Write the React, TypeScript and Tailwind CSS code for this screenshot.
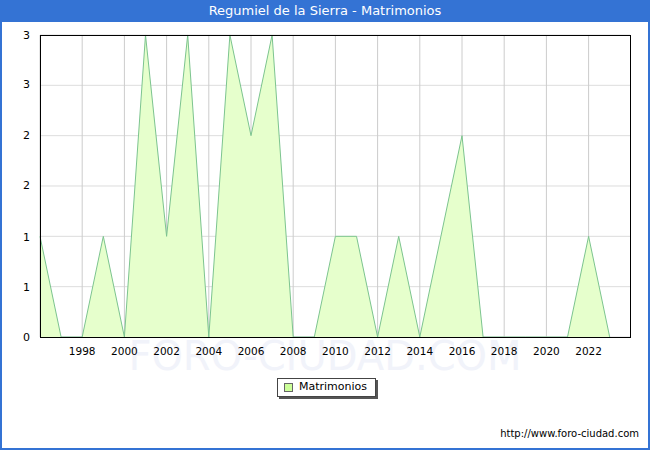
const data = [1,0,0,1,0,3,1,3,0,3,2,3,0,0,1,1,0,1,0,1,2,0,0,0,0,0,1,0];
const X = (i: number) => 40 + i * 21.1;
const Y = (v: number) => 337 - v * 100.67;

export default function App() {
  const pts = data.map((v, i) => `${X(i)},${Y(v)}`).join(" ");
  const area = `${X(0)},337 ${pts} ${X(data.length - 1)},337`;
  const ylabels = [["3",35],["3",84],["2",135],["2",185],["1",237],["1",287],["0",337]] as const;
  return (
    <div className="w-[650px] h-[450px] bg-[#3473d4] p-[2px] pt-0 flex flex-col" style={{ fontFamily: '"DejaVu Sans", Verdana, sans-serif' }}>
      <div className="h-[22px] flex items-center justify-center text-white text-[13px]">Regumiel de la Sierra - Matrimonios</div>
      <div className="flex-1 bg-white relative">
        <svg width="646" height="426" className="absolute left-0 top-0" style={{ transform: "translate(-2px,-22px)", overflow: "visible" }}>
          <text x="325" y="370" textAnchor="middle" fontSize="40" fill="#f1f3fa" fontFamily="DejaVu Sans">FORO-CIUDAD.COM</text>
          {[0,0.5,1,1.5,2,2.5,3].map(v => <line key={v} x1="40" x2="630" y1={Y(v)} y2={Y(v)} stroke="#dddddd" />)}
          {Array.from({ length: 14 }, (_, k) => <line key={k} x1={X(k*2)} x2={X(k*2)} y1="35" y2="337" stroke="#cccccc" />)}
          <polygon points={area} fill="#e6ffcc" />
          <polyline points={pts} fill="none" stroke="#7cc48f" strokeWidth="1" />
          <rect x="40.5" y="35.5" width="590" height="302" fill="none" stroke="#000" />
          {ylabels.map(([t, y], i) => <text key={i} x="30" y={y + 4} textAnchor="end" fontSize="11" fill="#000">{t}</text>)}
          {Array.from({ length: 13 }, (_, k) => <text key={k} x={X(2 + k*2)} y="355" textAnchor="middle" fontSize="10.5" fill="#000">{1998 + k*2}</text>)}
          <text x="639" y="437" textAnchor="end" fontSize="10" fill="#000">http://www.foro-ciudad.com</text>
        </svg>
        <div className="absolute left-[275px] top-[356px] w-[99px] h-[19px] bg-white border border-[#444] shadow-[2px_2px_0_#555] flex items-center text-[11px] text-black">
          <div className="w-[9px] h-[9px] bg-[#ccff99] border border-[#666] ml-[6px] mr-[6px]" />Matrimonios
        </div>
      </div>
    </div>
  );
}
